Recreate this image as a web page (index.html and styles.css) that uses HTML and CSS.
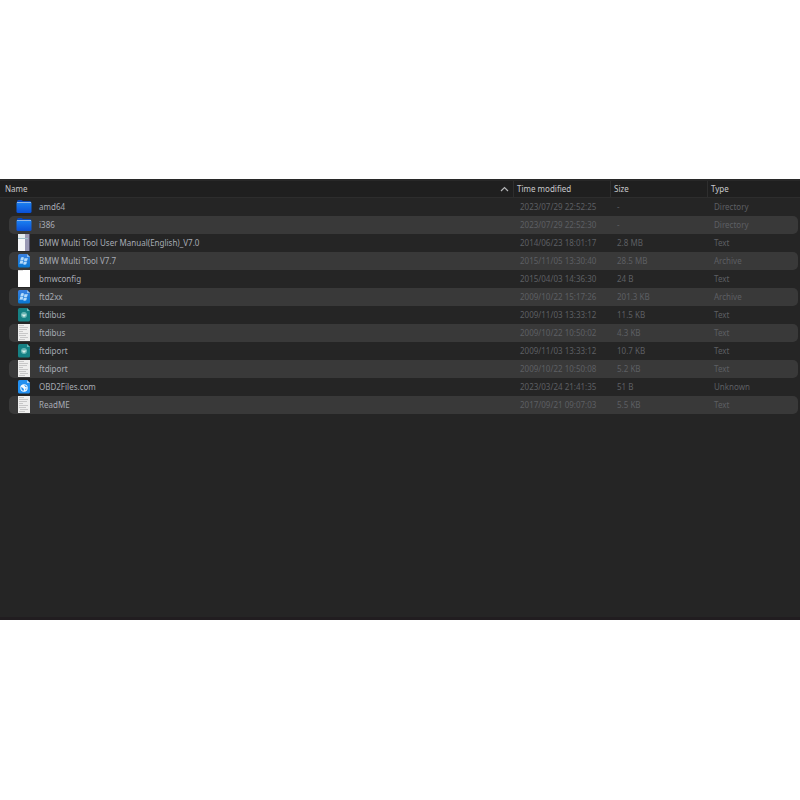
FILE: index.html
```
<!DOCTYPE html>
<html lang="en">
<head>
<meta charset="utf-8">
<title>Files</title>
<link rel="stylesheet" href="styles.css">
</head>
<body>
<svg class="defs" aria-hidden="true">
  <defs>
    <linearGradient id="blue" x2="0" y2="1"><stop offset="0" stop-color="#1b80f2"/><stop offset="1" stop-color="#0a4fd6"/></linearGradient>
    <linearGradient id="sky" x2="0" y2="1"><stop offset="0" stop-color="#3a80e0"/><stop offset="1" stop-color="#0878d2"/></linearGradient>
  </defs>
  <symbol id="folder" viewBox="0 0 16 18">
    <path d="M1 4.500V3.500q0-1.500 1.500-1.500H5.500l1.500 1H14q1 0 1 1.500z" fill="#0a48bd"/>
    <path d="M.5 4.500H15.500V13.500q0 1.500-1.500 1.500H2q-1.500 0-1.500-1.500z" fill="url(#blue)"/>
    <path d="M1 4.500H15" stroke="#8db6e8"/>
  </symbol>
  <symbol id="manual" viewBox="0 0 16 18">
    <path d="M2 0H14V17H2z" fill="#f7f7f9"/>
    <path d="M9 0H13V17H9z" fill="#9a98b4"/>
    <path d="M13 0H14V17H13z" fill="#55536b"/>
    <path d="M2 0H9V4H2z" fill="#e4eaed"/>
    <path d="M2 4.500H12" stroke="#9ebfca"/>
  </symbol>
  <symbol id="archive" viewBox="0 0 16 18">
    <path d="M3.500 2H11l3 3v9q0 1.500-1.500 1.500h-9Q2 15.500 2 14V3.500Q2 2 3.500 2z" fill="url(#sky)"/>
    <path d="M11 2l3 3h-3z" fill="#8bbcf0"/>
    <path d="M5 5.500q1.500-.9 3 0l-.7 2.900q-1.500-.8-3 0zM8.600 5.900q1.500.8 3.300 0l-.8 2.900q-1.500.8-3.200 0zM4.200 9q1.500-.8 3 0l-.7 2.900q-1.500-.8-3 0zM7.800 9.400q1.500.8 3.200 0l-.7 2.900q-1.500.8-3.200 0z" fill="#b5dbfb"/>
  </symbol>
  <symbol id="blank" viewBox="0 0 16 18">
    <path d="M2 0H14V17H2z" fill="#fff"/>
    <path d="M2 0H7V1H2z" fill="#dcdcdc"/>
  </symbol>
  <symbol id="catalog" viewBox="0 0 16 18">
    <path d="M3.500 2H11l3 3v9q0 1.500-1.500 1.500h-9Q2 15.500 2 14V3.500Q2 2 3.500 2z" fill="#168184"/>
    <path d="M11 2l3 3h-3z" fill="#6bb9ba"/>
    <circle cx="8" cy="9" r="3" fill="#69b6b4"/>
    <path d="M5.500 8.500h5L8 11z" fill="#d8eeea"/>
  </symbol>
  <symbol id="text" viewBox="0 0 16 18">
    <path d="M2 0H14V17H2z" fill="#eeeeed"/>
    <path d="M3 1.500h5M3 3.500h9M3 5.500h8M3 7.500h4M3 9.500h9M3 11.500h7M4 13.500h8M3 15.500h6" stroke="#bcbcbc" stroke-width=".8"/>
  </symbol>
  <symbol id="web" viewBox="0 0 16 18">
    <path d="M3.500 2H11l3 3v9q0 1.500-1.500 1.500h-9Q2 15.500 2 14V3.500Q2 2 3.500 2z" fill="#2390f0"/>
    <path d="M11 2l3 3h-3z" fill="#a6d3fb"/>
    <circle cx="8" cy="10" r="3.700" fill="#f4faff"/>
    <path d="M5 9l2 1 1 1.500-.5 1.500Q5 12 5 9zM8 7l1.500 2 1.500.3q-.5-2-3-2.300zM9.500 10.500l1.300.2-1.500 1.800z" fill="#2390f0"/>
  </symbol>
</svg>
<main class="panel">
<table class="files">
  <thead>
    <tr>
      <th scope="col" aria-sort="ascending">Name<svg class="sort" viewBox="0 0 9 6" aria-hidden="true"><path d="M1 5L4.500 1.500L8 5"/></svg></th>
      <th scope="col">Time modified</th>
      <th scope="col">Size</th>
      <th scope="col">Type</th>
    </tr>
  </thead>
  <tbody>
    <tr><td><svg class="icon"><use href="#folder"/></svg>amd64</td><td>2023/07/29 22:52:25</td><td>-</td><td>Directory</td></tr>
    <tr><td><svg class="icon"><use href="#folder"/></svg>i386</td><td>2023/07/29 22:52:30</td><td>-</td><td>Directory</td></tr>
    <tr><td><svg class="icon"><use href="#manual"/></svg>BMW Multi Tool User Manual(English)_V7.0</td><td>2014/06/23 18:01:17</td><td>2.8 MB</td><td>Text</td></tr>
    <tr><td><svg class="icon"><use href="#archive"/></svg>BMW Multi Tool V7.7</td><td>2015/11/05 13:30:40</td><td>28.5 MB</td><td>Archive</td></tr>
    <tr><td><svg class="icon"><use href="#blank"/></svg>bmwconfig</td><td>2015/04/03 14:36:30</td><td>24 B</td><td>Text</td></tr>
    <tr><td><svg class="icon"><use href="#archive"/></svg>ftd2xx</td><td>2009/10/22 15:17:26</td><td>201.3 KB</td><td>Archive</td></tr>
    <tr><td><svg class="icon"><use href="#catalog"/></svg>ftdibus</td><td>2009/11/03 13:33:12</td><td>11.5 KB</td><td>Text</td></tr>
    <tr><td><svg class="icon"><use href="#text"/></svg>ftdibus</td><td>2009/10/22 10:50:02</td><td>4.3 KB</td><td>Text</td></tr>
    <tr><td><svg class="icon"><use href="#catalog"/></svg>ftdiport</td><td>2009/11/03 13:33:12</td><td>10.7 KB</td><td>Text</td></tr>
    <tr><td><svg class="icon"><use href="#text"/></svg>ftdiport</td><td>2009/10/22 10:50:08</td><td>5.2 KB</td><td>Text</td></tr>
    <tr><td><svg class="icon"><use href="#web"/></svg>OBD2Files.com</td><td>2023/03/24 21:41:35</td><td>51 B</td><td>Unknown</td></tr>
    <tr><td><svg class="icon"><use href="#text"/></svg>ReadME</td><td>2017/09/21 09:07:03</td><td>5.5 KB</td><td>Text</td></tr>
  </tbody>
</table>
</main>
</body>
</html>
```
FILE: styles.css
```
* { box-sizing: border-box; }
body {
  margin: 0;
  min-height: 100vh;
  display: grid;
  grid-template-rows: 179fr 441fr 180fr;
  background: #fff;
  font-family: "Noto Sans", sans-serif;
  font-size: 8px;
  line-height: 18px;
}
.defs { position: absolute; width: 0; height: 0; }
.panel {
  grid-row: 2;
  background: #252525;
  border-top: 2px solid #282828;
  border-bottom: 3px solid #211d20;
}
.files, .files thead, .files tbody { display: block; }
.files tr {
  display: grid;
  grid-template-columns: 1fr 97px 97px 93px;
}
.files thead tr {
  line-height: 16px;
  background: #1f1f1f;
  border-bottom: 1px solid #2d2d2d;
}
.files th {
  display: flex;
  align-items: center;
  justify-content: space-between;
  padding: 0 4px 0 3px;
  border-left: 1px solid #2e2e2e;
  font-weight: 400;
  text-align: left;
  color: #c8c9cc;
}
.files th:first-child { border-left: 0; padding-left: 5px; }
.sort { width: 9px; height: 6px; fill: none; stroke: #b5b6b8; stroke-width: 1.2; }
.files tbody tr {
  margin: 0 2px 0 9px;
  grid-template-columns: 1fr 97px 97px 91px;
  border-radius: 5px;
}
.files tbody tr:nth-child(even) { background: #393939; }
.files td {
  padding: 0 0 0 7px;
  color: #5d5f63;
  white-space: nowrap;
}
.files td:first-child {
  display: flex;
  align-items: center;
  gap: 7px;
  color: #a7abb4;
}
.icon { width: 16px; height: 18px; }
```
